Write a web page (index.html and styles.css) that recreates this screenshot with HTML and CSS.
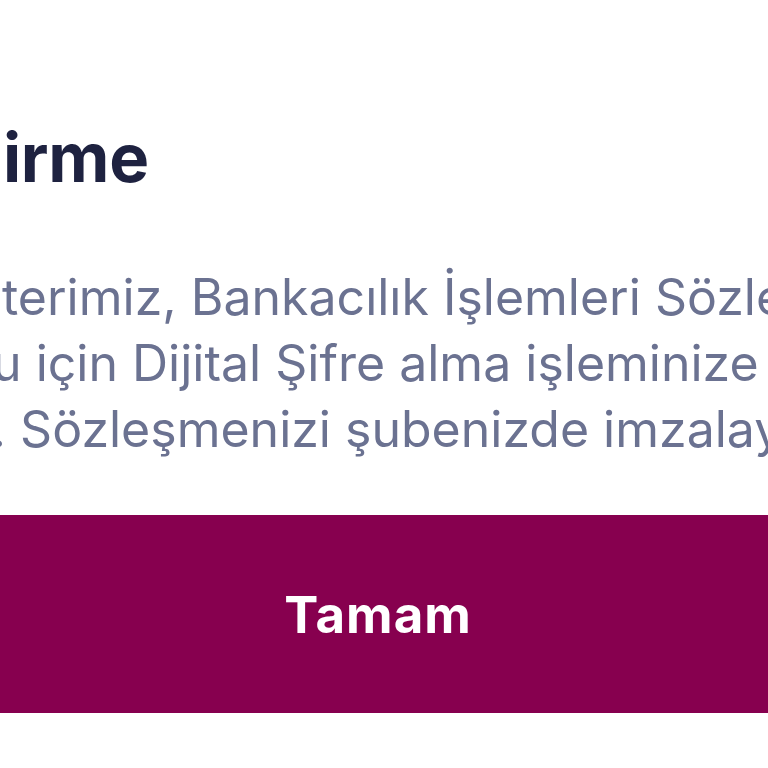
FILE: index.html
```html
<!DOCTYPE html>
<html lang="tr">
<head>
<meta charset="utf-8">
<title>Bilgilendirme</title>
<link rel="stylesheet" href="styles.css">
</head>
<body>
<div class="dialog">
  <h1 class="title"><span class="cut"><span>Bilgilend</span></span>irme</h1>
  <div class="message">
    <div class="line l1"><span class="cut"><span>Değerli Müş</span></span>terimiz, Bankacılık İşlemleri Sözleşmesi</div>
    <div class="line l2"><span class="cut"><span>eksik olduğ</span></span>u için Dijital Şifre alma işleminize devam</div>
    <div class="line l3"><span class="cut"><span>edilememektedir.</span></span> Sözleşmenizi şubenizde imzalayabilirsiniz.</div>
  </div>
  <button class="ok">Tamam</button>
</div>
</body>
</html>
```
FILE: styles.css
```css
html, body {
  margin: 0;
  padding: 0;
  background: #ffffff;
  overflow: hidden;
  width: 768px;
  height: 768px;
}
.dialog {
  display: flex;
  flex-direction: column;
  font-family: Inter, "Noto Sans", sans-serif;
}
.cut {
  display: inline-flex;
  width: 0;
  justify-content: flex-end;
  white-space: nowrap;
}
.title {
  margin: 116px 0 0 0;
  padding-left: 3px;
  font-size: 67px;
  line-height: 84px;
  font-weight: 700;
  color: #1e2240;
  white-space: nowrap;
  letter-spacing: -0.3px;
}
.message {
  margin-top: 64px;
  display: flex;
  flex-direction: column;
  color: #6b7291;
  font-size: 50px;
  line-height: 66px;
  font-weight: 400;
}
.line {
  white-space: nowrap;
}
.l1 { padding-left: 2px; }
.l1 .cut span { margin-right: 16px; }
.l2 { margin-left: -8px; }
.l3 { padding-left: 6px; }
.ok {
  margin-top: 53px;
  height: 198px;
  width: 100%;
  border: 0;
  background: #87004f;
  color: #ffffff;
  font-family: Inter, "Noto Sans", sans-serif;
  font-size: 51px;
  font-weight: 700;
  letter-spacing: 1px;
  padding: 0 12px 0 0;
}
```
